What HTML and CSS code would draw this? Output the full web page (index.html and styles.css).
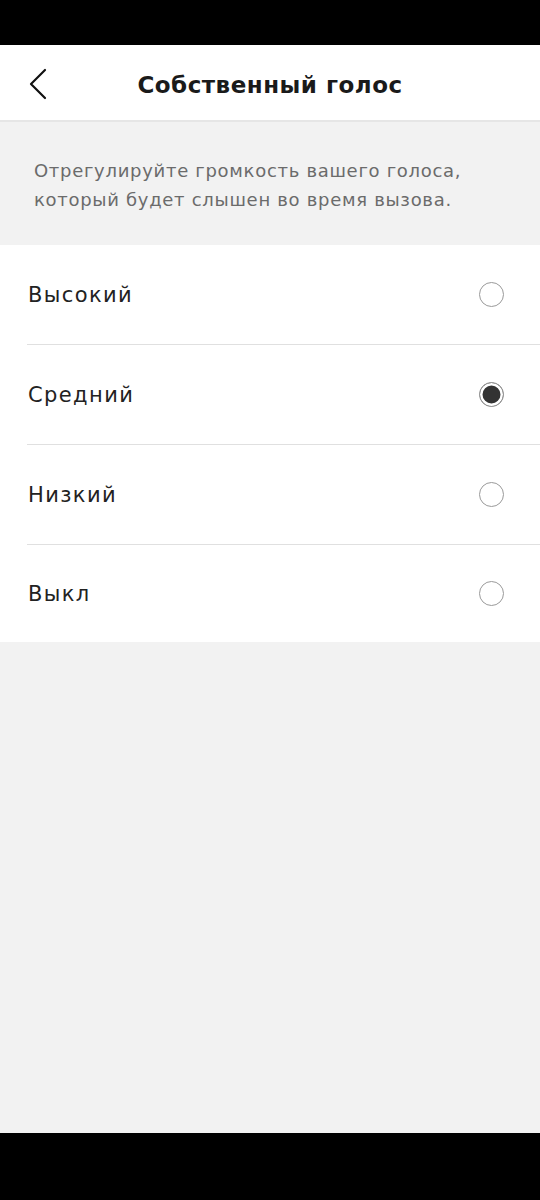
FILE: index.html
```html
<!DOCTYPE html>
<html>
<head>
  <meta name="viewport" content="width=device-width, initial-scale=1.0">
  <title>Собственный голос</title>
  <link rel="stylesheet" href="styles.css">
</head>
<body>
  <div class="screen">
    <div class="status-bar"></div>

    <div class="header">
      <a class="back" href="#">
        <svg width="18" height="32" viewBox="0 0 18 32">
          <polyline points="16,2 2,16 16,30" fill="none" stroke="#111" stroke-width="2.2" stroke-linecap="round" stroke-linejoin="round"/>
        </svg>
      </a>
      <h1 class="title">Собственный голос</h1>
    </div>

    <div class="hint">
      Отрегулируйте громкость вашего голоса,<br>который будет слышен во время вызова.
    </div>

    <!-- список уровней громкости -->
    <div class="options">
      <label class="option">
        <span class="option-name">Высокий</span>
        <input type="radio" name="level" value="high">
        <span class="radio"></span>
      </label>
      <label class="option">
        <span class="option-name">Средний</span>
        <input type="radio" name="level" value="mid" checked>
        <span class="radio"></span>
      </label>
      <label class="option">
        <span class="option-name">Низкий</span>
        <input type="radio" name="level" value="low">
        <span class="radio"></span>
      </label>
      <label class="option">
        <span class="option-name">Выкл</span>
        <input type="radio" name="level" value="off">
        <span class="radio"></span>
      </label>
    </div>

    <div class="filler"></div>
    <div class="nav-bar"></div>
  </div>
</body>
</html>
```

FILE: styles.css
```css
body {
  font-family: "DejaVu Sans", sans-serif;
  margin: 0;
  padding: 0;
}

.screen {
  display: flex;
  flex-direction: column;
  height: 1200px;
  background-color: #f2f2f2;
}

.status-bar {
  height: 45px;
  background-color: #000;
}

.header {
  display: flex;
  align-items: center;
  justify-content: center;
  position: relative;
  box-sizing: border-box;
  height: 77px;
  padding-top: 5px;
  background-color: #fff;
  border-bottom: 2px solid #e6e6e6;
}

.back {
  position: absolute;
  left: 29px;
  top: 23px;
  display: flex;
}

.title {
  margin: 0;
  font-size: 23px;
  font-weight: bold;
  color: #1a1a1a;
  letter-spacing: 0.5px;
}

.hint {
  padding: 34px 10px 31px 34px;
  font-size: 18px;
  line-height: 29px;
  color: #6b6b6b;
  letter-spacing: 0.7px;
}

.options {
  background-color: #fff;
}

.option {
  display: flex;
  align-items: center;
  justify-content: space-between;
  height: 99px;
  margin-left: 27px;
  padding-right: 36px;
  border-bottom: 1px solid #e0e0e0;
  cursor: pointer;
}

.option:last-child {
  height: 97px;
  border-bottom: none;
}

.option-name {
  padding-left: 1px;
  font-size: 21px;
  color: #222;
  letter-spacing: 1.4px;
}

.option input {
  display: none;
}

.radio {
  box-sizing: border-box;
  width: 25px;
  height: 25px;
  border: 1.5px solid #9a9a9a;
  border-radius: 50%;
  background-color: #fff;
}

.option input:checked + .radio {
  background-color: #333;
  box-shadow: inset 0 0 0 2.5px #fff;
}

.filler {
  flex: 1;
}

.nav-bar {
  height: 67px;
  background-color: #000;
}
```
